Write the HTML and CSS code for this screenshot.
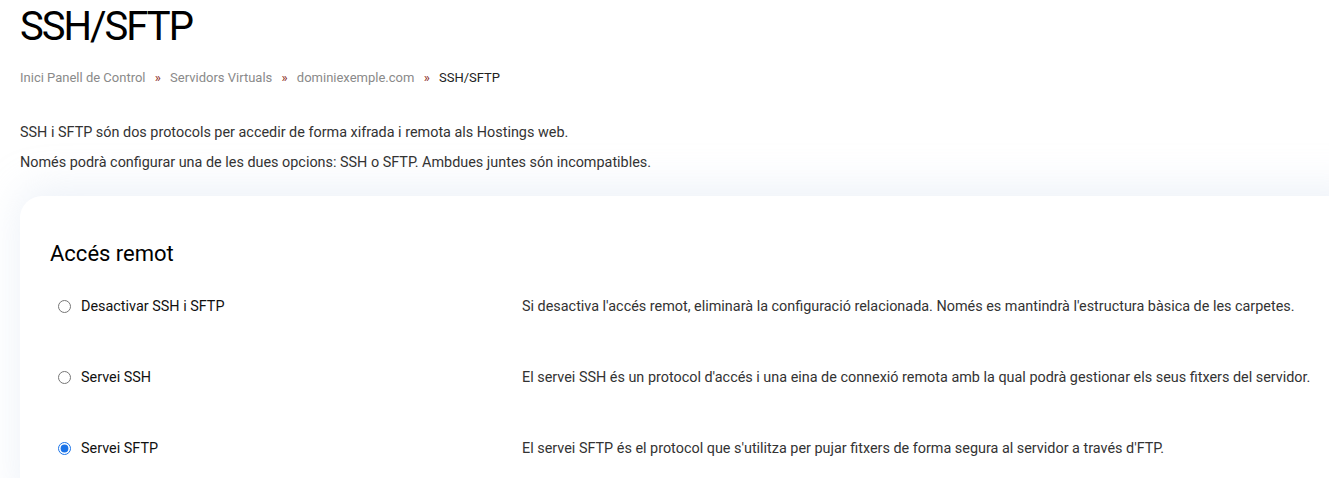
FILE: index.html
```html
<!DOCTYPE html>
<html lang="ca">
<head>
  <meta charset="UTF-8" />
  <meta name="viewport" content="width=device-width, initial-scale=1.0"/>
  <title>SSH/SFTP</title>
  <link rel="stylesheet" href="styles.css">
</head>
<body>
  <h1>SSH/SFTP</h1>

  <nav class="breadcrumb">
    <a href="#">Inici Panell de Control</a>
    <span class="sep">&raquo;</span>
    <a href="#">Servidors Virtuals</a>
    <span class="sep">&raquo;</span>
    <a href="#">dominiexemple.com</a>
    <span class="sep">&raquo;</span>
    <span class="current">SSH/SFTP</span>
  </nav>

  <div class="intro">
    <p>SSH i SFTP són dos protocols per accedir de forma xifrada i remota als Hostings web.</p>
    <p>Només podrà configurar una de les dues opcions: SSH o SFTP. Ambdues juntes són incompatibles.</p>
  </div>

  <div class="card">
    <h2>Accés remot</h2>

    <div class="option">
      <label><input type="radio" name="access" value="none"> Desactivar SSH i SFTP</label>
      <p>Si desactiva l'accés remot, eliminarà la configuració relacionada. Només es mantindrà l'estructura bàsica de les carpetes.</p>
    </div>

    <div class="option">
      <label><input type="radio" name="access" value="ssh"> Servei SSH</label>
      <p>El servei SSH és un protocol d'accés i una eina de connexió remota amb la qual podrà gestionar els seus fitxers del servidor.</p>
    </div>

    <div class="option">
      <label><input type="radio" name="access" value="sftp" checked> Servei SFTP</label>
      <p>El servei SFTP és el protocol que s'utilitza per pujar fitxers de forma segura al servidor a través d'FTP.</p>
    </div>
  </div>
</body>
</html>
```

FILE: styles.css
```css
* {
  box-sizing: border-box;
  margin: 0;
  padding: 0;
}

body {
  font-family: Roboto, 'Liberation Sans', sans-serif;
  background: #fff;
  color: #222;
  padding: 0 0 0 20px;
  overflow: hidden;
}

h1 {
  font-size: 40px;
  font-weight: 400;
  line-height: 48px;
  letter-spacing: -2px;
  margin-top: 3px;
  color: #000;
}

.breadcrumb {
  margin-top: 17px;
  font-size: 13px;
  line-height: 20px;
}

.breadcrumb a {
  color: #8a8a8a;
  text-decoration: none;
}

.breadcrumb .sep {
  color: #8b2a1a;
  margin: 0 6px;
}

.breadcrumb .current {
  color: #222;
}

.intro {
  margin-top: 35px;
  font-size: 14.4px;
  line-height: 20px;
  color: #333;
}

.intro p {
  margin-bottom: 10px;
}

.card {
  margin-top: 23px;
  background: #fff;
  border-radius: 22px 0 0 0;
  box-shadow: 0 -8px 40px rgba(200, 215, 235, 0.35);
  padding: 44px 0 10px 30px;
  margin-right: -40px;
}

.card h2 {
  font-size: 22px;
  font-weight: 400;
  line-height: 28px;
  color: #000;
  margin-bottom: 23px;
}

.option {
  display: flex;
  align-items: center;
  height: 71px;
  padding-bottom: 40px;
}

.option label {
  width: 472px;
  flex: none;
  display: flex;
  align-items: center;
  gap: 10px;
  font-size: 14.4px;
  color: #111;
  padding-left: 8px;
}

.option input {
  width: 13px;
  height: 13px;
  margin: 0;
  accent-color: #1a73e8;
}

.option p {
  font-size: 14.4px;
  color: #333;
  white-space: nowrap;
}
```
